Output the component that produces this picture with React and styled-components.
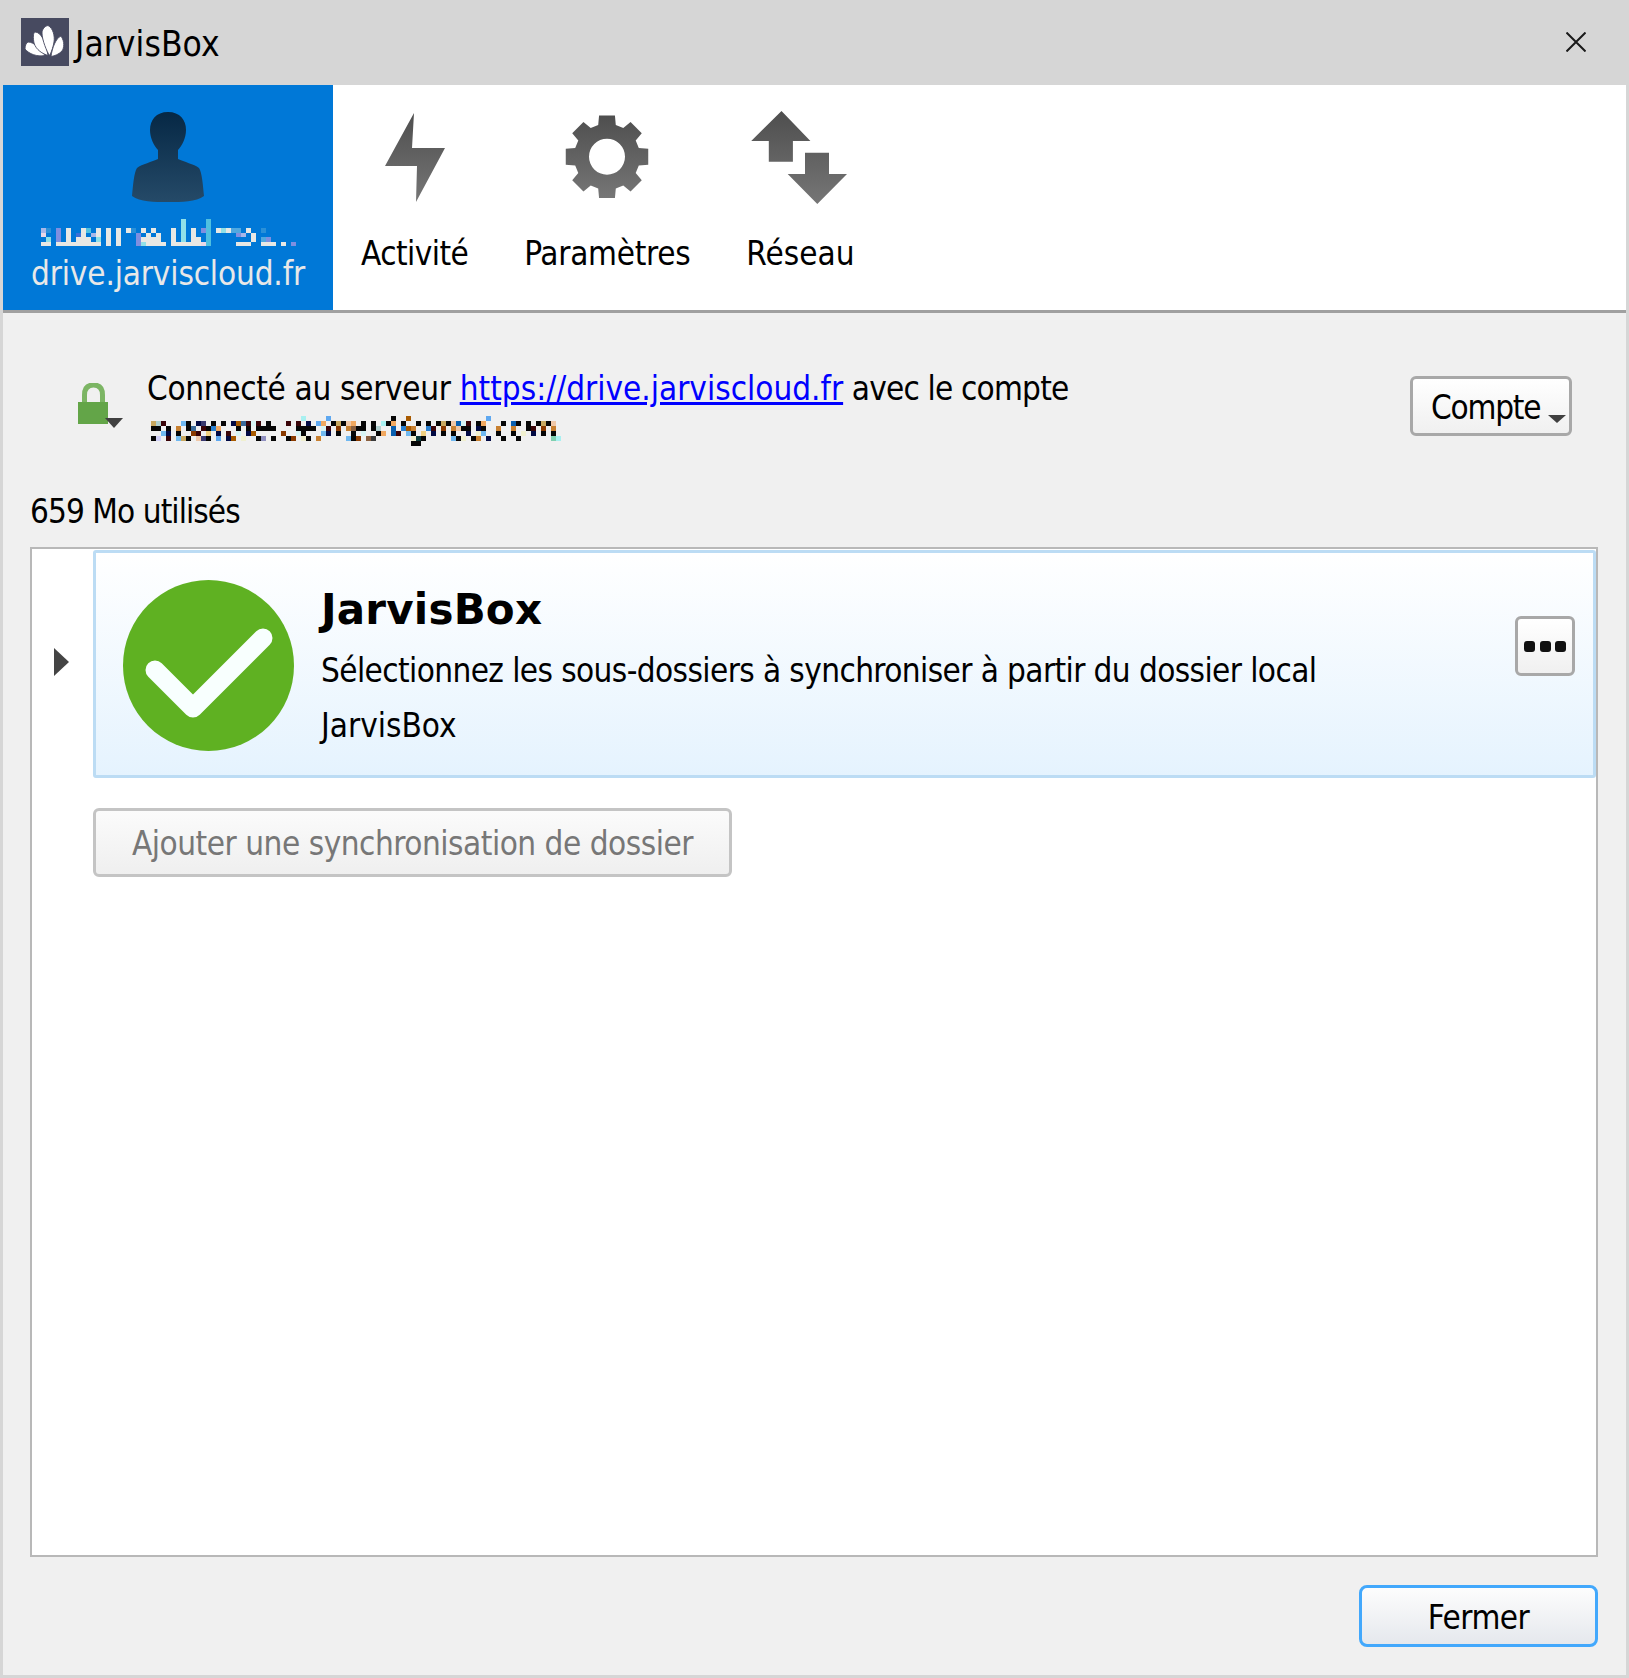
import styled, { createGlobalStyle } from "styled-components";

const UI_FONT = `"DejaVu Sans Condensed", "DejaVu Sans", sans-serif`;

// redacted account names, one pixel-mosaic cell per token: column + colour key
const PALETTE = {
  k: "#060606", m: "#3a0408", n: "#020a44", B: "#0a60b0", l: "#70b8f0", b: "#5fa8f0",
  c: "#a8f0f0", p: "#d8f4f4", o: "#f0a860", O: "#c88030", r: "#8a3a00", R: "#a85a00",
  t: "#f0d080", T: "#c8a860", e: "#f0c8a8", q: "#f0f0d0", s: "#3a6a9a", v: "#d0d0f8",
  d: "#3a3a3a", g: "#b0d0d0", G: "#80d0b0", D: "#0a3a3a", w: "#9090c0", u: "#8a6040",
  a: "#2a80d0", z: "#3a3a70",
};

const EMAIL_ROWS = [
  "30c 35b 48k 51R 67b",
  "0T 1g 2m 6l 7k 9n 10z 12k 14k 16n 17R 18s 19m 20p 21m 23k 27m 29m 31n 33b 34o 36k 37T 38k 39e 40o 42k 44k 46c 47k 48o 50k 53k 55k 57k 58T 59k 60e 61B 62p 63m 65k 66o 70k 72B 73k 75k 77k 78T 79k 80e",
  "0k 1k 3k 5O 7k 8s 10m 11k 12a 13o 17k 19k 21k 22k 23k 24k 29k 30k 31k 32k 34p 35m 37r 39O 40u 41k 42k 44k 45g 48B 50a 51R 52O 55a 56m 58r 60O 61e 62k 63k 65n 66k 69O 72O 75k 76m 78r 80O",
  "2l 3n 5k 8r 9m 11t 13n 15m 17p 19n 20R 26r 29p 30k 34l 35n 37k 40k 42p 45k 46o 48B 49m 51l 52k 54t 56n 58k 60k 63n 65q 66l 69k 72k 74q 76n 78k 80k",
  "0k 1v 3m 5l 6T 7k 9e 10z 11k 13b 15n 16R 18q 21k 22w 24k 27k 28r 30q 31k 33O 39l 40k 41r 43u 44d 52q 53D 54k 60l 61k 62q 64k 65O 67n 70k 73k 80G 81c",
  "52k 53k",
];

const TAB_PALETTE = {
  W: "#e8e8e4", c: "#90e0e8", C: "#50c0e0", P: "#7f8fe0", L: "#a8b8e8", b: "#2a90d8",
  B: "#50a8e0", i: "#e8d8e8", V: "#3a70d8",
};

const ACCOUNT_ROWS = [
  "28c 33C",
  "28c 33C",
  "0L 1b 3P 5W 8W 9C 11W 13W 15W 17W 18b 20W 22W 26W 28c 30W 32P 33C 35W 36c 37W 38B 39B 41W 44b",
  "0i 3P 5W 7V 8W 10L 11W 13W 15W 19P 21W 23W 26W 28c 30W 33C 39P 40L 42W",
  "1c 3P 5W 7W 8W 9W 11c 13W 15W 19P 20W 21W 22W 23W 26W 28c 30W 31W 33C 42W 44B 45P",
  "0W 1W 3W 4W 5W 6W 7W 8W 9W 10W 11W 13W 15W 19P 20c 21W 22W 23W 24W 26W 27W 28W 29W 30W 31W 32i 33C 39W 40W 41W 44W 45W 46W 48W 50P",
];

function parseCells(rows) {
  return rows.flatMap((row, y) =>
    row.split(" ").map((token) => ({ x: parseInt(token, 10), y, key: token.slice(-1) }))
  );
}

function Mosaic({ rows, palette, cols, cellW, cellH, className }) {
  return (
    <svg
      className={className}
      width={cols * cellW}
      height={rows.length * cellH}
      viewBox={`0 0 ${cols * cellW} ${rows.length * cellH}`}
      shapeRendering="crispEdges"
    >
      {parseCells(rows).map((c) => (
        <rect
          key={`${c.x}-${c.y}`}
          x={c.x * cellW}
          y={c.y * cellH}
          width={cellW}
          height={cellH}
          fill={palette[c.key]}
        />
      ))}
    </svg>
  );
}

function gearPath(cx, cy, outer, base, hole) {
  const pts = [];
  for (let i = 0; i < 8; i++) {
    const a = (i * Math.PI) / 4 - Math.PI / 2;
    const spread = [-0.27, -0.19, 0.19, 0.27];
    const radii = [base, outer, outer, base];
    spread.forEach((s, j) => {
      pts.push([cx + radii[j] * Math.cos(a + s), cy + radii[j] * Math.sin(a + s)]);
    });
  }
  const ring = "M" + pts.map((p) => `${p[0].toFixed(2)} ${p[1].toFixed(2)}`).join("L") + "Z";
  return `${ring}M${cx - hole} ${cy}a${hole} ${hole} 0 1 0 ${hole * 2} 0a${hole} ${hole} 0 1 0 ${-hole * 2} 0Z`;
}

const IconGradient = ({ id }) => (
  <linearGradient id={id} x1="0" y1="0" x2="0" y2="1">
    <stop offset="0" stopColor="#4e4e4e" />
    <stop offset="1" stopColor="#767676" />
  </linearGradient>
);

function BoltIcon() {
  return (
    <svg width="104" height="104" viewBox="0 0 104 104">
      <defs><IconGradient id="boltFill" /></defs>
      <path d="M51 5 L49 40 L82 40 L53 94 L54 58 L22 58 Z" fill="url(#boltFill)" />
    </svg>
  );
}

function GearIcon() {
  return (
    <svg width="104" height="104" viewBox="0 0 104 104">
      <defs><IconGradient id="gearFill" /></defs>
      <path d={gearPath(52, 48.7, 42, 33, 18)} fill="url(#gearFill)" fillRule="evenodd" />
    </svg>
  );
}

function NetworkIcon() {
  return (
    <svg width="104" height="104" viewBox="0 0 104 104">
      <defs><IconGradient id="netFill" /></defs>
      <path
        d="M33.5 3 L62.4 33 L44.9 33 L44.9 53.7 L20.8 53.7 L20.8 33 L3.2 33 Z M57 44.7 L81 44.7 L81 66 L99 66 L69.3 96 L39.7 66 L57 66 Z"
        fill="url(#netFill)"
      />
    </svg>
  );
}

function PersonIcon() {
  return (
    <svg width="72" height="92" viewBox="0 0 72 92">
      <defs>
        <linearGradient id="personFill" x1="0" y1="0" x2="0" y2="1">
          <stop offset="0" stopColor="#062845" />
          <stop offset="1" stopColor="#254a68" />
        </linearGradient>
      </defs>
      <path
        d="M36 0 C48 0 54 8 54 18 C54 26 50 34 46 38 L46 47 C52 50 62 52 67 56 C70 60 71 74 72 84 C64 90 50 90 36 90 C22 90 8 90 0 84 C1 74 2 60 5 56 C10 52 20 50 26 47 L26 38 C22 34 18 26 18 18 C18 8 24 0 36 0 Z"
        fill="url(#personFill)"
      />
    </svg>
  );
}

function AppLogo() {
  return (
    <svg width="48" height="48" viewBox="0 0 48 48">
      <rect width="48" height="48" fill="#474a60" />
      <g fill="#fff" stroke="#474a60" strokeWidth="0.9">
        <path d="M7 24 C13 24 20 31 24 37.5 C16 39 8 36 4 31 C4 28 5 25 7 24 Z" />
        <path d="M14 14 C20 14 25 24 27 37.5 C22 36 15 32 13 25 C12 20 12 15 14 14 Z" />
        <path d="M27 7.5 C32 10 34 18 33 24 C32 30 30 35 28.5 37.5 C26 34 21 22 21 15 C21 11 24 8 27 7.5 Z" />
        <path d="M40 18 C44 24 43 30 41 33 C38 36 34 38 30 38.5 C31 30 35 20 40 18 Z" />
      </g>
    </svg>
  );
}

function CloseIcon() {
  return (
    <svg width="20" height="20" viewBox="0 0 20 20">
      <path d="M0.5 0.5 L19.5 19.5 M19.5 0.5 L0.5 19.5" stroke="#1a1a1a" strokeWidth="2" />
    </svg>
  );
}

function LockIcon() {
  return (
    <svg width="46" height="46" viewBox="0 0 46 46">
      <path d="M6.5 20 L6.5 12 C6.5 5 9.5 2 15.5 2 C21.5 2 24.5 5 24.5 12 L24.5 20" fill="none" stroke="#7cb564" strokeWidth="5" />
      <rect x="0" y="19" width="30" height="22" fill="#63a548" />
      <path d="M27 35 L45 35 L36 45 Z" fill="#404040" />
    </svg>
  );
}

function StatusIcon() {
  return (
    <svg width="171" height="171" viewBox="0 0 171 171">
      <circle cx="85.5" cy="85.5" r="85.5" fill="#5fb122" />
      <path d="M32 90 L70 128 L140 58" fill="none" stroke="#f8fffe" strokeWidth="19" strokeLinecap="round" strokeLinejoin="round" />
    </svg>
  );
}

const GlobalStyle = createGlobalStyle`
  html, body {
    margin: 0;
    padding: 0;
    background: #d6d6d6;
  }
`;

const Window = styled.div`
  width: 1629px;
  height: 1678px;
  box-sizing: border-box;
  display: flex;
  flex-direction: column;
  background: #d6d6d6;
  font-family: ${UI_FONT};
  font-size: 33px;
  color: #000;
`;

const TitleBar = styled.div`
  height: 85px;
  flex: none;
  display: flex;
  align-items: center;
  padding: 0 43px 1px 21px;
  box-sizing: border-box;
  background: #d6d6d6;
`;

const TitleText = styled.span`
  margin-left: 6px;
  padding-top: 4px;
  flex: 1;
  font-size: 35px;
  letter-spacing: 0.1px;
`;

const Frame = styled.div`
  flex: 1;
  min-height: 0;
  display: flex;
  flex-direction: column;
  margin: 0 3px 3px;
  background: #f0f0f0;
`;

const Toolbar = styled.div`
  height: 228px;
  flex: none;
  display: flex;
  box-sizing: border-box;
  background: #fff;
  border-bottom: 3px solid #a0a0a0;
`;

const AccountTab = styled.div`
  width: 330px;
  height: 225px;
  box-sizing: border-box;
  display: flex;
  flex-direction: column;
  align-items: center;
  padding-top: 27px;
  background: #0078d7;
  color: #e8e8e8;
`;

const AccountName = styled(Mosaic)`
  display: block;
  margin-top: 15px;
`;

const AccountHost = styled.div`
  line-height: 40px;
  margin-top: 8px;
  letter-spacing: -0.15px;
`;

const ToolButton = styled.div`
  display: flex;
  flex-direction: column;
  align-items: center;
  padding: 23px 28px 0;
`;

const ToolLabel = styled.div`
  margin-top: 22px;
  line-height: 40px;
  letter-spacing: ${({ $tracking }) => $tracking || 0}px;
`;

const Content = styled.div`
  flex: 1;
  min-height: 0;
  display: flex;
  flex-direction: column;
  padding: 57px 28px 28px 27px;
`;

const InfoRow = styled.div`
  height: 76px;
  flex: none;
  display: flex;
  align-items: flex-start;
`;

const LockWrap = styled.div`
  margin: 13px 0 0 48px;
  width: 69px;
`;

const InfoText = styled.div`
  flex: 1;
  line-height: 38px;
`;

const Tracked = styled.span`
  letter-spacing: ${({ $tracking }) => $tracking}px;
`;

const ServerLink = styled.a`
  color: #0000ff;
  text-decoration: underline;
`;

const AccountMail = styled(Mosaic)`
  display: block;
  margin: 8px 0 0 4px;
`;

const RaisedButton = styled.div`
  box-sizing: border-box;
  background: linear-gradient(#ffffff, #f0f0f0);
  border: 3px solid #a8a8a8;
  border-radius: 6px;
`;

const AccountButton = styled(RaisedButton)`
  width: 162px;
  height: 60px;
  margin: 6px 26px 0 0;
  display: flex;
  align-items: center;
  padding: 3px 0 0 18px;
  position: relative;
  letter-spacing: -1.2px;
`;

const ButtonCaret = styled.span`
  position: absolute;
  right: 3px;
  bottom: 10px;
  border-left: 9px solid transparent;
  border-right: 9px solid transparent;
  border-top: 8px solid #404040;
`;

const Usage = styled.div`
  margin-top: 46px;
  margin-bottom: -1px;
  line-height: 40px;
  letter-spacing: -0.93px;
`;

const Panel = styled.div`
  flex: 1;
  min-height: 0;
  margin-top: 16px;
  display: flex;
  flex-direction: column;
  padding-top: 1px;
  box-sizing: border-box;
  background: #fff;
  border: 2px solid #b8b8b8;
`;

const TreeRow = styled.div`
  display: flex;
  align-items: center;
`;

const Expander = styled.div`
  width: 61px;
  flex: none;
  box-sizing: border-box;
  padding: 0 0 4px 22px;
`;

const ExpanderArrow = styled.div`
  width: 0;
  height: 0;
  border-top: 14px solid transparent;
  border-bottom: 14px solid transparent;
  border-left: 15px solid #444;
`;

const FolderRow = styled.div`
  flex: 1;
  height: 228px;
  box-sizing: border-box;
  display: flex;
  padding: 0 18px 0 27px;
  background: linear-gradient(#ffffff, #e5f3fe);
  border: 3px solid #bcdcf4;
  border-radius: 3px;
`;

const StatusWrap = styled.div`
  margin-top: 27px;
  height: 171px;
`;

const FolderText = styled.div`
  flex: 1;
  margin-left: 27px;
  padding-top: 29px;
  line-height: 55px;
`;

const FolderName = styled.div`
  font-family: "DejaVu Sans", sans-serif;
  font-weight: 700;
  font-size: 42px;
  letter-spacing: 0.2px;
  line-height: 56px;
  margin-bottom: 5px;
`;

const MoreButton = styled(RaisedButton)`
  width: 60px;
  height: 60px;
  margin-top: 63px;
  display: flex;
  align-items: center;
  justify-content: center;
  gap: 4.5px;
`;

const MoreDot = styled.span`
  width: 11px;
  height: 11px;
  border-radius: 3px;
  background: #111;
`;

const AddRow = styled.div`
  padding-left: 61px;
  margin-top: 30px;
`;

const AddButton = styled(RaisedButton)`
  width: 639px;
  height: 69px;
  display: flex;
  align-items: center;
  padding: 2px 0 0 36px;
  color: #777;
  letter-spacing: -0.48px;
  background: linear-gradient(#fbfbfb, #efefef);
  border-color: #c4c4c4;
`;

const Footer = styled.div`
  margin-top: 28px;
  display: flex;
  justify-content: flex-end;
`;

const CloseButton = styled.div`
  width: 239px;
  height: 62px;
  box-sizing: border-box;
  display: flex;
  align-items: center;
  justify-content: center;
  padding-top: 3px;
  letter-spacing: -0.5px;
  background: linear-gradient(#fdfdfd, #e5e8ed);
  border: 3px solid #42a8fc;
  border-radius: 8px;
`;

export default function App() {
  return (
    <Window>
      <GlobalStyle />
      <TitleBar>
        <AppLogo />
        <TitleText>JarvisBox</TitleText>
        <CloseIcon />
      </TitleBar>
      <Frame>
        <Toolbar>
          <AccountTab>
            <PersonIcon />
            <AccountName rows={ACCOUNT_ROWS} palette={TAB_PALETTE} cols={51} cellW={5} cellH={4.5} />
            <AccountHost>drive.jarviscloud.fr</AccountHost>
          </AccountTab>
          <ToolButton>
            <BoltIcon />
            <ToolLabel $tracking={-0.55}>Activité</ToolLabel>
          </ToolButton>
          <ToolButton>
            <GearIcon />
            <ToolLabel $tracking={-0.3}>Paramètres</ToolLabel>
          </ToolButton>
          <ToolButton>
            <NetworkIcon />
            <ToolLabel>Réseau</ToolLabel>
          </ToolButton>
        </Toolbar>
        <Content>
          <InfoRow>
            <LockWrap>
              <LockIcon />
            </LockWrap>
            <InfoText>
              <Tracked $tracking={-0.32}>Connecté au serveur </Tracked>
              <ServerLink href="#">https://drive.jarviscloud.fr</ServerLink>
              <Tracked $tracking={-0.8}> avec le compte</Tracked>
              <AccountMail rows={EMAIL_ROWS} palette={PALETTE} cols={82} cellW={5} cellH={5} />
            </InfoText>
            <AccountButton>
              Compte
              <ButtonCaret />
            </AccountButton>
          </InfoRow>
          <Usage>659 Mo utilisés</Usage>
          <Panel>
            <TreeRow>
              <Expander>
                <ExpanderArrow />
              </Expander>
              <FolderRow>
                <StatusWrap>
                  <StatusIcon />
                </StatusWrap>
                <FolderText>
                  <FolderName>JarvisBox</FolderName>
                  <Tracked $tracking={-0.6}>Sélectionnez les sous-dossiers à synchroniser à partir du dossier local</Tracked>
                  <br />
                  JarvisBox
                </FolderText>
                <MoreButton>
                  <MoreDot />
                  <MoreDot />
                  <MoreDot />
                </MoreButton>
              </FolderRow>
            </TreeRow>
            <AddRow>
              <AddButton>Ajouter une synchronisation de dossier</AddButton>
            </AddRow>
          </Panel>
          <Footer>
            <CloseButton>Fermer</CloseButton>
          </Footer>
        </Content>
      </Frame>
    </Window>
  );
}
